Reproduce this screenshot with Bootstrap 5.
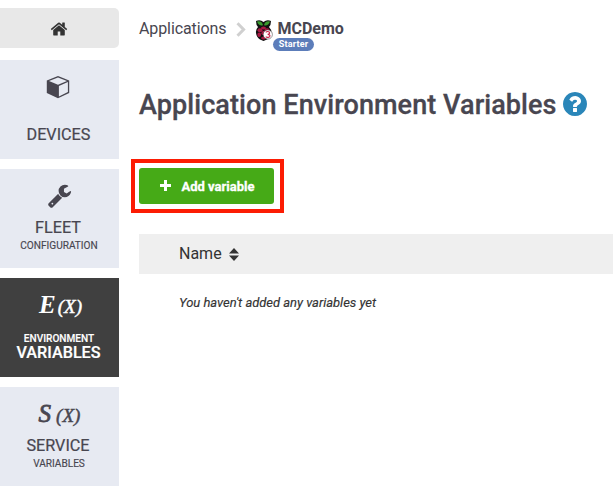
<!DOCTYPE html>
<html lang="en">
<head>
<meta charset="utf-8">
<meta name="viewport" content="width=device-width, initial-scale=1">
<title>Application Environment Variables</title>
<link href="https://cdn.jsdelivr.net/npm/bootstrap@5.3.0/dist/css/bootstrap.min.css" rel="stylesheet">
<style>
body{font-family:Roboto,sans-serif;color:#484650;height:494px;overflow:hidden;background:#fff}
svg{display:block;fill:currentColor}
.side{width:119px;gap:10px;padding-top:8px}
.home{height:40px;background:#e8e8e8;border-radius:0 5px 5px 0;color:#333;margin-bottom:2px;padding:2px 1px 0 0}
.tile{height:99px;background:#e7eaf2;color:#484650;padding-right:3px}
.tile:hover{color:#484650}
.tile.current{background:#404040;color:#fff;font-weight:500}
.glyph{height:50px;padding-top:15px}
.glyph.wrench{padding:14px 0 0 2px}
.glyph-x{height:50px;padding:12px 0 0 5px;font:italic 700 25px/30px "Liberation Serif",serif}
.glyph-x small{font-size:19px;font-weight:400;-webkit-text-stroke:.5px;margin-left:2px}
.glyph-x.thin{font-weight:400;-webkit-text-stroke:.8px;padding-left:3px}
.glyph-x.thin small{margin-left:5px}
.glyph-x.tall{height:51px}
.big{font-size:16.200px;line-height:18px;-webkit-text-stroke:.2px}
.tall ~ .big{line-height:12px;padding-left:1px}
.tall ~ .tiny{padding-top:1px;line-height:17px}
.devices{padding:16px 0 0 1px}
.tiny{font-size:10.100px;line-height:18px;padding-left:2px;-webkit-text-stroke:.15px}
.main{padding-left:20px}
.crumbs{height:60px;padding-top:18px;font-size:16px;line-height:22px}
.crumbs a{color:#484650;letter-spacing:-.1px}
.chev{margin:4px 9px 0 10px}
.pi{margin:2px 4px 0 0}
.plan{left:134px;top:38px;height:13px;width:41px;font-size:9px;line-height:13px;background:#5c7dba;letter-spacing:.2px}
h1{font-size:27px;font-weight:500;letter-spacing:.08px;line-height:32px;margin:29px 0 0;white-space:nowrap;-webkit-text-stroke:.3px}
.help{color:#2a86b9;margin:0 0 3px 4px}
.frame{border:4px solid #fc1c03;width:153px;height:54px;margin:38px 0 0 -8px;padding:5px 4px 4px}
.btn-add{--bs-btn-bg:#46aa17;--bs-btn-color:#fff;--bs-btn-hover-bg:#3d9713;--bs-btn-hover-color:#fff;width:135px;height:36px;border:0;border-radius:3px;font-size:13px;font-weight:700;gap:11px}
.btn-add svg{margin:0 0 1px 1px}
.btn-add span{-webkit-text-stroke:.3px;padding-top:1px}
.thead-bar{height:40px;margin-top:21px;background:#efefef;padding-left:40px;font-size:16px;color:#333}
.sort{margin-left:7px}
.none{padding:20px 0 0 40px;font-size:13px;line-height:18px;font-style:italic;color:#333;letter-spacing:-.03px;-webkit-text-stroke:.15px}
</style>
<script src="https://cdn.jsdelivr.net/npm/bootstrap@5.3.0/dist/js/bootstrap.bundle.min.js"></script>
</head>
<body class="d-flex">
<nav class="side d-flex flex-column flex-shrink-0 text-center">
  <a href="#" class="home d-flex align-items-center justify-content-center" aria-label="Home">
    <svg width="18" height="18" viewBox="0 0 1792 1792"><path d="M1472 992v480q0 26-19 45t-45 19h-384v-384h-256v384h-384q-26 0-45-19t-19-45v-480q0-1 .5-3t.5-3l575-474 575 474q1 2 1 6zm223-69l-62 74q-8 9-21 11h-3q-13 0-21-7l-692-577-692 577q-12 8-24 7-13-2-21-11l-62-74q-8-10-7-23.500t11-21.500l719-599q32-26 76-26t76 26l244 204v-195q0-14 9-23t23-9h192q14 0 23 9t9 23v408l219 182q10 8 11 21.500t-7 23.500z"/></svg>
  </a>
  <a href="#" class="tile text-decoration-none">
    <div class="glyph d-flex justify-content-center"><svg width="24" height="24" viewBox="0 0 24 24"><path d="M.8 5.500 12 1l11.200 4.500v12.400L12 23.200.8 17.900z"/><path fill="#e7eaf2" d="M3 5.900 12 2.500l9 3.400-9 3.800zM12.900 10.900l9-3.900v10.100l-9 4.300z"/></svg></div>
    <div class="big devices">DEVICES</div>
  </a>
  <a href="#" class="tile text-decoration-none">
    <div class="glyph wrench d-flex justify-content-center"><svg width="25" height="25" viewBox="0 0 1792 1792"><path d="M448 1472q0-26-19-45t-45-19-45 19-19 45 19 45 45 19 45-19 19-45zm644-420l-682 682q-37 37-90 37-52 0-91-37l-106-108q-38-36-38-90 0-53 38-91l681-681q39 98 114.500 173.500t173.500 114.500zm634-435q0 39-23 106-47 134-164.500 217.500t-258.500 83.500q-185 0-316.500-131.500t-131.500-316.500 131.500-316.500 316.500-131.500q58 0 121.500 16.500t107.500 46.500q16 11 16 28t-16 28l-293 169v224l193 107q5-3 79-48.500t135.500-81 70.500-35.500q15 0 23.500 10t8.500 25z"/></svg></div>
    <div class="big">FLEET</div>
    <div class="tiny">CONFIGURATION</div>
  </a>
  <a href="#" class="tile current text-decoration-none">
    <div class="glyph-x tall">E<small>(X)</small></div>
    <div class="tiny">ENVIRONMENT</div>
    <div class="big">VARIABLES</div>
  </a>
  <a href="#" class="tile text-decoration-none">
    <div class="glyph-x thin">S<small>(X)</small></div>
    <div class="big">SERVICE</div>
    <div class="tiny">VARIABLES</div>
  </a>
</nav>
<main class="main flex-grow-1">
  <div class="crumbs d-flex position-relative">
    <a href="#" class="text-decoration-none">Applications</a>
    <svg class="chev" width="10" height="15" viewBox="0 0 10 15"><path fill="none" stroke="#d0d0d0" stroke-width="3" d="M1.500 1.300 7.600 7.500 1.500 13.700"/></svg>
    <svg class="pi" width="18" height="22" viewBox="0 0 18 22"><path fill="#111" d="M1 1Q5-1 8.500 2 12-1 16 1q0 4-2 6 3 3 2.500 6.500Q15 18 12 19.500L8.500 21 5 19.500Q1.500 17 1 13 .5 9.500 3 7 1 5 1 1z"/><path fill="#399b2e" d="M2 1.500q5-1 6 3.800Q3.500 6 2 1.500zm13 0q-5-1-6 3.800 4.500.7 6-3.800z"/><g fill="#a91843"><ellipse cx="8.500" cy="8" rx="2.500" ry="1.500"/><ellipse cx="5" cy="10.300" rx="2.500" ry="2"/><ellipse cx="12" cy="10.300" rx="2.500" ry="2"/><circle cx="8.500" cy="13.200" r="2.100"/><ellipse cx="4.200" cy="14.800" rx="1.800" ry="2.200"/><ellipse cx="8.500" cy="18" rx="2.400" ry="1.500"/></g><circle cx="12.800" cy="14.500" r="4.600" fill="#fff" stroke="#333" stroke-width=".5"/><path fill="none" stroke="#c81840" stroke-width="1.100" d="M10.700 12.200q2-1.200 3.500-.2 1.300 1.800-1.500 2.400 3 .2 2 2.200-1.500 1.500-4 .2"/></svg>
    <span class="fw-bold">MCDemo</span>
    <span class="plan position-absolute rounded-pill text-white fw-bold text-center">Starter</span>
  </div>
  <div class="d-flex">
    <h1>Application Environment Variables</h1>
    <svg class="help mt-auto" width="28" height="28" viewBox="0 0 1792 1792"><path d="M1024 1376v-192q0-14-9-23t-23-9h-192q-14 0-23 9t-9 23v192q0 14 9 23t23 9h192q14 0 23-9t9-23zm256-672q0-88-55.500-163t-138.500-116-170-41q-243 0-371 213-15 24 8 42l132 100q7 6 19 6 16 0 25-12 53-68 86-92 34-24 86-24 48 0 85.500 26t37.500 59q0 38-20 61t-68 45q-63 28-115.500 86.500t-52.500 125.500v36q0 14 9 23t23 9h192q14 0 23-9t9-23q0-19 21.500-49.500t54.500-49.500q32-18 49-28.500t46-35 44.500-48 28-60.500 12.500-81zm384 192q0 209-103 385.500t-279.500 279.500-385.500 103-385.500-103-279.500-279.500-103-385.500 103-385.500 279.500-279.500 385.500-103 385.500 103 279.500 279.500 103 385.500z"/></svg>
  </div>
  <div class="frame">
    <button type="button" class="btn btn-add d-flex align-items-center justify-content-center p-0">
      <svg width="11" height="11" viewBox="0 0 11 11"><path d="M4 0h3v4h4v3H7v4H4V7H0V4h4z"/></svg><span>Add variable</span>
    </button>
  </div>
  <div class="thead-bar d-flex align-items-center">
    <span>Name</span>
    <svg class="sort" width="10" height="13" viewBox="0 0 10 13"><path d="M5 0l5 5.500H0zM0 7.500h10L5 13z"/></svg>
  </div>
  <p class="none mb-0">You haven't added any variables yet</p>
</main>
</body>
</html>
